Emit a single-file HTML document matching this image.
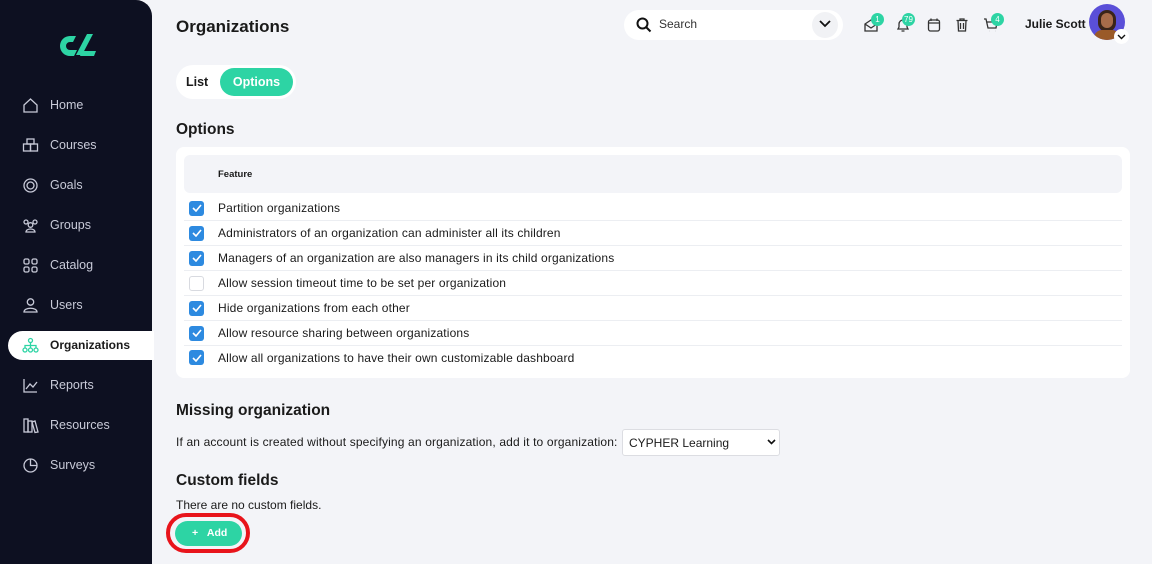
<!DOCTYPE html>
<html><head><meta charset="utf-8"><style>
*{box-sizing:border-box;margin:0;padding:0}
body{width:1152px;height:564px;overflow:hidden;background:#f3f4f8;font-family:"Liberation Sans",sans-serif;color:#1a1a1a;position:relative}
.sb{position:absolute;left:0;top:0;width:152px;height:564px;background:#0d1021;border-top-right-radius:16px}
.nav{position:absolute;left:22px;font-size:12.5px;color:#c8cad8;display:flex;align-items:center;gap:11px;height:20px}
.nav svg{width:17px;height:17px;fill:none;stroke:#c8cad8;stroke-width:1.3}
.act{position:absolute;left:8px;top:331px;width:146px;height:29px;background:#fff;border-radius:15px 0 0 15px}
.abs{position:absolute}
.h2{font-weight:bold;font-size:15.5px}
.row{position:absolute;left:184px;width:938px;height:25px;border-bottom:1px solid #eceef2;font-size:12px;letter-spacing:0.15px;display:flex;align-items:center}
.cb{width:15px;height:15px;border-radius:3px;background:#2d8ae0;margin-left:5px;margin-right:14px;display:flex;align-items:center;justify-content:center}
.cb.off{background:#fff;border:1px solid #d8dae0}
.badge{position:absolute;background:#2dd4a4;color:#fff;font-size:8px;border-radius:7px;height:13px;min-width:13px;text-align:center;line-height:13px;padding:0 2px}
.ic{position:absolute;width:16px;height:16px;fill:none;stroke:#333;stroke-width:1.3}
</style></head><body>
<div class="sb">
<svg class="abs" style="left:56px;top:33px" width="40" height="26" viewBox="0 0 40 26"><path d="M14 3 A10 10 0 1 0 14 23 L18 23 L21 17 L14 17 A4 4 0 1 1 14 9 L17 9 L20 3Z" fill="#2dd4a4"/><path d="M31 1 L37 1 L26 22 L20 22Z" fill="#2dd4a4"/><path d="M26 18 L40 18 L38 23 L24 23Z" fill="#2dd4a4"/></svg>
<div class="act"></div>
<div class="nav" style="top:95px"><svg viewBox="0 0 17 17"><path d="M2 8 L8.5 2 L15 8 V15 H2Z"/></svg>Home</div>
<div class="nav" style="top:135px"><svg viewBox="0 0 17 17"><rect x="5" y="2" width="7" height="5"/><rect x="1.5" y="7" width="7" height="7"/><rect x="8.5" y="7" width="7" height="7"/></svg>Courses</div>
<div class="nav" style="top:175px"><svg viewBox="0 0 17 17"><circle cx="8.5" cy="8.5" r="6.5"/><circle cx="8.5" cy="8.5" r="3.5"/></svg>Goals</div>
<div class="nav" style="top:215px"><svg viewBox="0 0 17 17"><circle cx="4" cy="5" r="2"/><circle cx="13" cy="5" r="2"/><circle cx="8.5" cy="8" r="2.3"/><path d="M4 15 C4 11 13 11 13 15Z"/></svg>Groups</div>
<div class="nav" style="top:255px"><svg viewBox="0 0 17 17"><rect x="2" y="2" width="5" height="5" rx="1.5"/><rect x="10" y="2" width="5" height="5" rx="1.5"/><rect x="2" y="10" width="5" height="5" rx="1.5"/><rect x="10" y="10" width="5" height="5" rx="1.5"/></svg>Catalog</div>
<div class="nav" style="top:295px"><svg viewBox="0 0 17 17"><circle cx="8.5" cy="5" r="3.2"/><path d="M2 15 C2 10 15 10 15 15Z"/></svg>Users</div>
<div class="nav" style="top:335px;color:#1a1a1a;font-weight:bold;font-size:12px"><svg viewBox="0 0 17 17" style="stroke:#2dd4a4"><circle cx="8.5" cy="3.5" r="2"/><circle cx="3" cy="13" r="2"/><circle cx="8.5" cy="13" r="2"/><circle cx="14" cy="13" r="2"/><path d="M8.5 5.5V11M3 11V8.5H14V11"/></svg>Organizations</div>
<div class="nav" style="top:375px"><svg viewBox="0 0 17 17"><path d="M2 2V15H15M4 12L8 7L11 10L15 5"/></svg>Reports</div>
<div class="nav" style="top:415px"><svg viewBox="0 0 17 17"><rect x="2" y="2" width="4" height="13"/><rect x="6" y="4" width="4" height="11"/><path d="M10 5L13 4L16 15L13 15.5Z"/></svg>Resources</div>
<div class="nav" style="top:455px"><svg viewBox="0 0 17 17"><circle cx="8.5" cy="8.5" r="6.5"/><path d="M8.5 2V8.5H15"/></svg>Surveys</div>
</div>

<div class="abs" style="left:176px;top:17px;font-size:17px;font-weight:bold">Organizations</div>
<div class="abs" style="left:624px;top:10px;width:219px;height:30px;background:#fff;border-radius:15px"></div>
<svg class="abs" style="left:636px;top:17px" width="16" height="16" viewBox="0 0 16 16"><circle cx="6.5" cy="6.5" r="5" fill="none" stroke="#111" stroke-width="2"/><path d="M10 10L14.5 14.5" stroke="#111" stroke-width="2"/></svg>
<div class="abs" style="left:659px;top:17px;font-size:12px;color:#333">Search</div>
<div class="abs" style="left:812px;top:12px;width:26px;height:26px;border-radius:13px;background:#f1f2f5"></div>
<svg class="abs" style="left:819px;top:19px" width="12" height="10" viewBox="0 0 12 10"><path d="M1 2L6 7L11 2" fill="none" stroke="#111" stroke-width="1.8"/></svg>
<svg class="ic" style="left:863px;top:17px" viewBox="0 0 16 16"><path d="M2 7L8 3L14 7V14H2Z M2 7L8 11L14 7"/></svg><div class="badge" style="left:871px;top:13px">1</div>
<svg class="ic" style="left:895px;top:17px" viewBox="0 0 16 16"><path d="M3 12H13L12 10V7A4 4 0 0 0 4 7V10Z M6.5 14H9.5"/></svg><div class="badge" style="left:902px;top:13px">79</div>
<svg class="ic" style="left:926px;top:17px" viewBox="0 0 16 16"><rect x="2.5" y="3" width="11" height="11" rx="2"/><path d="M5 1.5V4M11 1.5V4M2.5 6H13.5"/></svg>
<svg class="ic" style="left:954px;top:17px" viewBox="0 0 16 16"><path d="M2.5 3.5H13.5M6 3.5V2H10V3.5M4 3.5L4.5 14H11.5L12 3.5M6.5 6V12M9.5 6V12"/></svg>
<svg class="ic" style="left:983px;top:17px" viewBox="0 0 16 16"><path d="M1 2H3L5 11H13L14 5H4M6 14h.1M12 14h.1"/></svg><div class="badge" style="left:991px;top:13px">4</div>
<div class="abs" style="left:1025px;top:17px;font-size:12px;font-weight:bold">Julie Scott</div>
<div class="abs" style="left:1089px;top:4px;width:36px;height:36px;border-radius:18px;background:#5a4fd8;overflow:hidden"><div style="position:absolute;left:9px;top:6px;width:18px;height:22px;border-radius:9px;background:#3a2418"></div><div style="position:absolute;left:12px;top:9px;width:12px;height:15px;border-radius:6px;background:#a86c4a"></div><div style="position:absolute;left:5px;top:26px;width:26px;height:16px;border-radius:10px;background:#9a5a28"></div></div>
<div class="abs" style="left:1114px;top:29px;width:15px;height:15px;border-radius:8px;background:#fff"></div>
<svg class="abs" style="left:1117px;top:34px" width="9" height="6" viewBox="0 0 9 6"><path d="M1 1L4.5 4.5L8 1" fill="none" stroke="#111" stroke-width="1.4"/></svg>

<div class="abs" style="left:176px;top:65px;width:120px;height:34px;background:#fff;border-radius:17px"></div>
<div class="abs" style="left:186px;top:75px;font-size:12.5px;font-weight:bold">List</div>
<div class="abs" style="left:220px;top:68px;width:73px;height:28px;background:#2dd4a4;border-radius:14px;color:#fff;font-size:12.5px;font-weight:bold;text-align:center;line-height:28px">Options</div>

<div class="abs h2" style="left:176px;top:121px">Options</div>
<div class="abs" style="left:176px;top:147px;width:954px;height:231px;background:#fff;border-radius:8px"></div>
<div class="abs" style="left:184px;top:155px;width:938px;height:38px;background:#f3f4f8;border-radius:6px"></div>
<div class="abs" style="left:218px;top:169px;font-size:9.5px;font-weight:bold">Feature</div>
<div class="row" style="top:196px"><div class="cb"><svg width="10" height="8" viewBox="0 0 10 8"><path d="M1 4L4 7L9 1" fill="none" stroke="#fff" stroke-width="1.6"/></svg></div>Partition organizations</div>
<div class="row" style="top:221px"><div class="cb"><svg width="10" height="8" viewBox="0 0 10 8"><path d="M1 4L4 7L9 1" fill="none" stroke="#fff" stroke-width="1.6"/></svg></div>Administrators of an organization can administer all its children</div>
<div class="row" style="top:246px"><div class="cb"><svg width="10" height="8" viewBox="0 0 10 8"><path d="M1 4L4 7L9 1" fill="none" stroke="#fff" stroke-width="1.6"/></svg></div>Managers of an organization are also managers in its child organizations</div>
<div class="row" style="top:271px"><div class="cb off"></div>Allow session timeout time to be set per organization</div>
<div class="row" style="top:296px"><div class="cb"><svg width="10" height="8" viewBox="0 0 10 8"><path d="M1 4L4 7L9 1" fill="none" stroke="#fff" stroke-width="1.6"/></svg></div>Hide organizations from each other</div>
<div class="row" style="top:321px"><div class="cb"><svg width="10" height="8" viewBox="0 0 10 8"><path d="M1 4L4 7L9 1" fill="none" stroke="#fff" stroke-width="1.6"/></svg></div>Allow resource sharing between organizations</div>
<div class="row" style="top:345px;border:none"><div class="cb"><svg width="10" height="8" viewBox="0 0 10 8"><path d="M1 4L4 7L9 1" fill="none" stroke="#fff" stroke-width="1.6"/></svg></div>Allow all organizations to have their own customizable dashboard</div>

<div class="abs h2" style="left:176px;top:402px">Missing organization</div>
<div class="abs" style="left:176px;top:435px;font-size:12px;letter-spacing:0.15px">If an account is created without specifying an organization, add it to organization:</div>
<div class="abs" style="left:622px;top:429px;width:158px;height:27px;background:#fff;border:1px solid #dcdde2;border-radius:3px;font-size:12px;padding:6px 0 0 6px">CYPHER Learning</div>
<svg class="abs" style="left:767px;top:439px" width="9" height="6" viewBox="0 0 9 6"><path d="M1 1L4.5 4.5L8 1" fill="none" stroke="#111" stroke-width="1.6"/></svg>

<div class="abs h2" style="left:176px;top:472px">Custom fields</div>
<div class="abs" style="left:176px;top:498px;font-size:12px">There are no custom fields.</div>
<div class="abs" style="left:166px;top:513px;width:84px;height:40px;border:4px solid #e8141b;border-radius:20px"></div>
<div class="abs" style="left:175px;top:521px;width:67px;height:25px;background:#2dd4a4;border-radius:13px;color:#fff;font-size:10.5px;font-weight:bold;line-height:25px;padding-left:17px">+&nbsp;&nbsp;&nbsp;Add</div>
</body></html>
